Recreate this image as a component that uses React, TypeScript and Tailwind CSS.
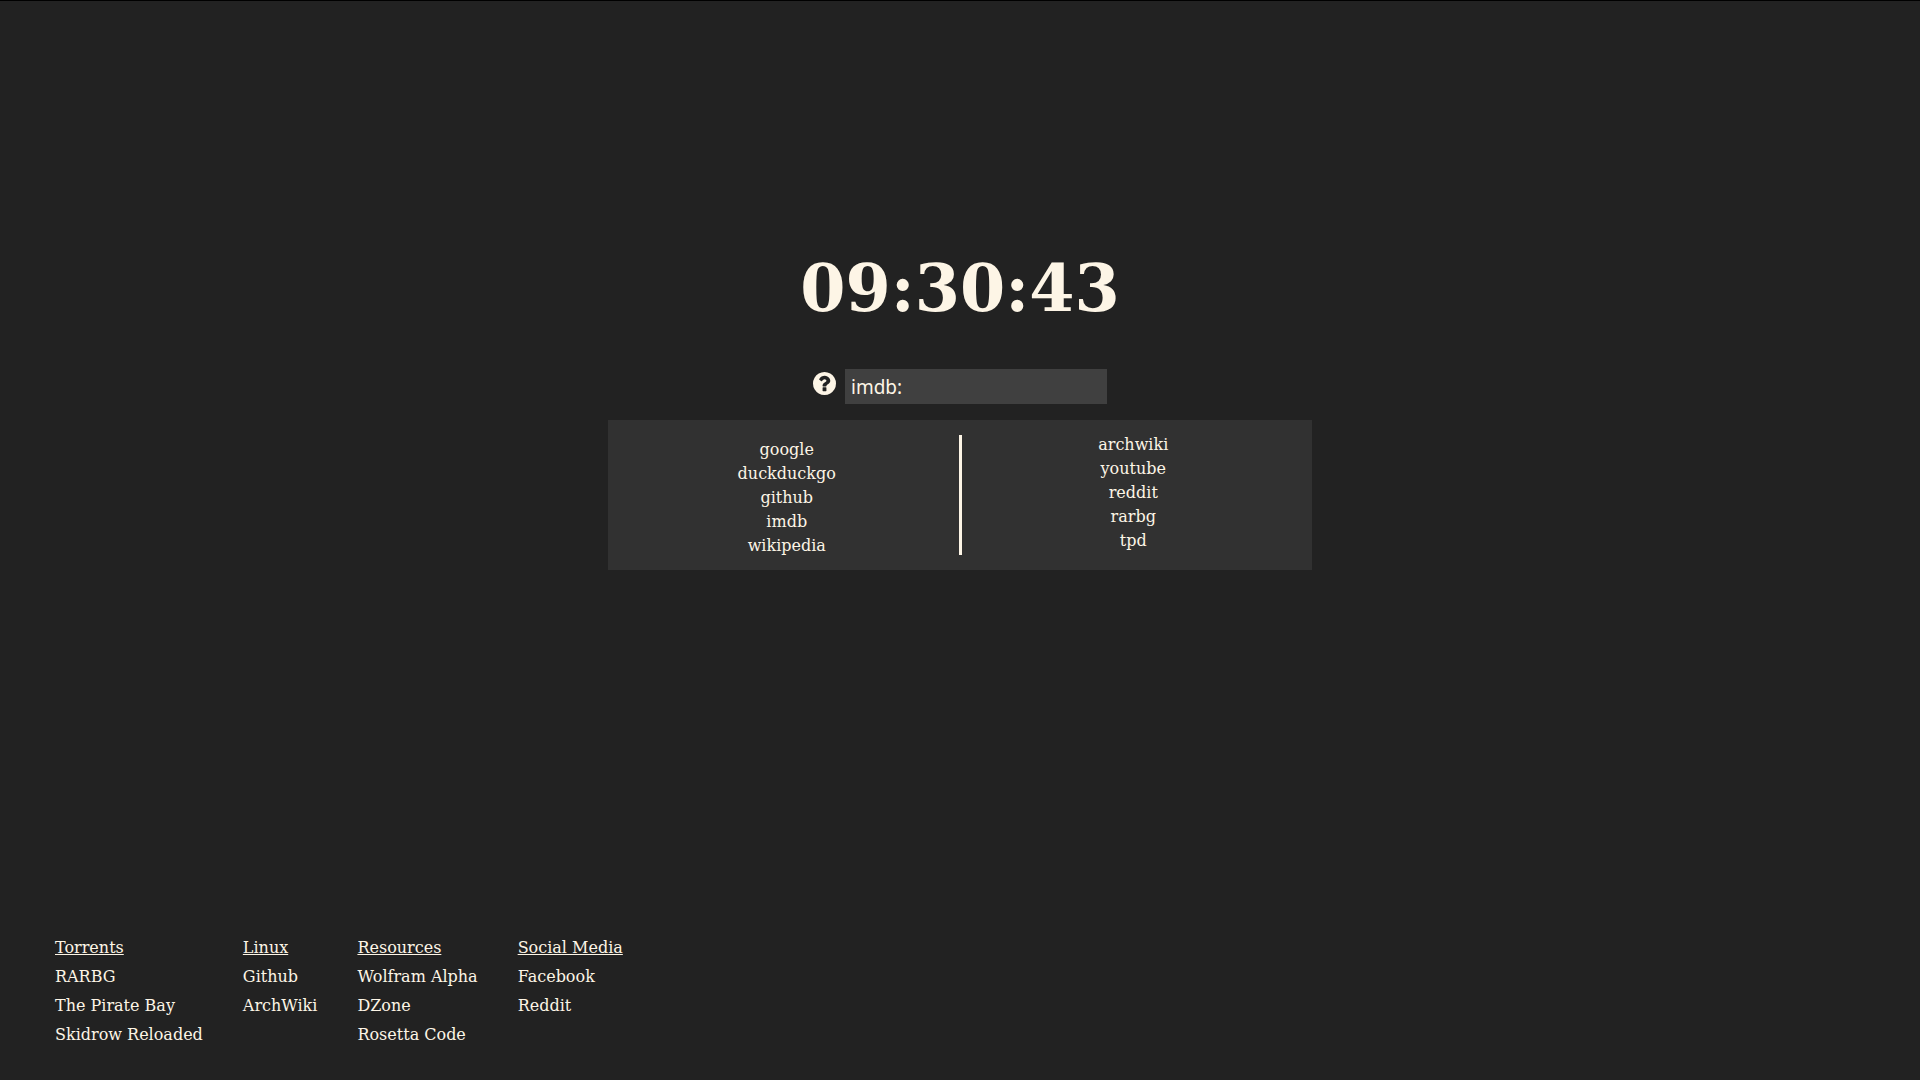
const enginesLeft = ["google", "duckduckgo", "github", "imdb", "wikipedia"];
const enginesRight = ["archwiki", "youtube", "reddit", "rarbg", "tpd"];

const groups = [
  { title: "Torrents", links: ["RARBG", "The Pirate Bay", "Skidrow Reloaded"] },
  { title: "Linux", links: ["Github", "ArchWiki"] },
  { title: "Resources", links: ["Wolfram Alpha", "DZone", "Rosetta Code"] },
  { title: "Social Media", links: ["Facebook", "Reddit"] },
];

function HelpIcon() {
  return (
    <svg viewBox="128 128 1536 1536" className="size-[23px] fill-current" aria-hidden="true">
      <path d="M1024 1376v-192q0-14-9-23t-23-9h-192q-14 0-23 9t-9 23v192q0 14 9 23t23 9h192q14 0 23-9t9-23zm256-672q0-88-55.5-163t-138.5-116-170-41q-243 0-371 213-15 24 8 42l132 100q7 6 19 6 16 0 25-12 53-68 86-92 34-24 86-24 48 0 85.5 26t37.5 59q0 38-20 61t-68 45q-63 28-115.5 86.5t-52.5 125.5v36q0 14 9 23t23 9h192q14 0 23-9t9-23q0-19 21.5-49.5t54.5-49.5q32-18 49-28.5t46-35 44.5-48 28-60.5 12.5-81zm384 192q0 209-103 385.5t-279.5 279.5-385.5 103-385.5-103-279.5-279.5-103-385.5 103-385.5 279.5-279.5 385.5-103 385.5 103 279.5 279.5 103 385.5z" />
    </svg>
  );
}

function EngineList({ items }: { items: string[] }) {
  return (
    <ul className="text-center leading-6">
      {items.map((item) => (
        <li key={item}>{item}</li>
      ))}
    </ul>
  );
}

export default function App() {
  return (
    <div className="flex min-h-screen flex-col justify-between border-t border-black bg-[#222222] font-['DejaVu_Serif',serif] text-base text-[#fdf5e6]">
      <main className="flex flex-col items-center pt-60">
        <h1 className="pt-px text-[65px] leading-[92px] font-bold">09:30:43</h1>
        <form className="mt-[35px] flex items-start gap-[9px]" onSubmit={(e) => e.preventDefault()}>
          <button type="button" aria-label="Help" className="pt-[3px]">
            <HelpIcon />
          </button>
          <input
            type="text"
            aria-label="Search"
            defaultValue="imdb:"
            className="h-[35px] w-[262px] bg-[#404040] px-[6px] font-['Noto_Sans',sans-serif] text-[19px] outline-none"
          />
        </form>
        <section className="mt-4 flex w-[704px] max-w-full bg-[#313131] px-[7px]">
          <div className="flex-1 pt-[18px] pb-3">
            <EngineList items={enginesLeft} />
          </div>
          <div className="my-[15px] w-[3px] bg-[#fdf5e6]" />
          <div className="flex-1 pt-[13px]">
            <EngineList items={enginesRight} />
          </div>
        </section>
      </main>
      <footer className="flex gap-10 px-[55px] pb-[31px]">
        {groups.map((group) => (
          <nav key={group.title} aria-label={group.title} className="leading-[29px]">
            <h2 className="underline">{group.title}</h2>
            <ul>
              {group.links.map((link) => (
                <li key={link}>
                  <a href="#">{link}</a>
                </li>
              ))}
            </ul>
          </nav>
        ))}
      </footer>
    </div>
  );
}
